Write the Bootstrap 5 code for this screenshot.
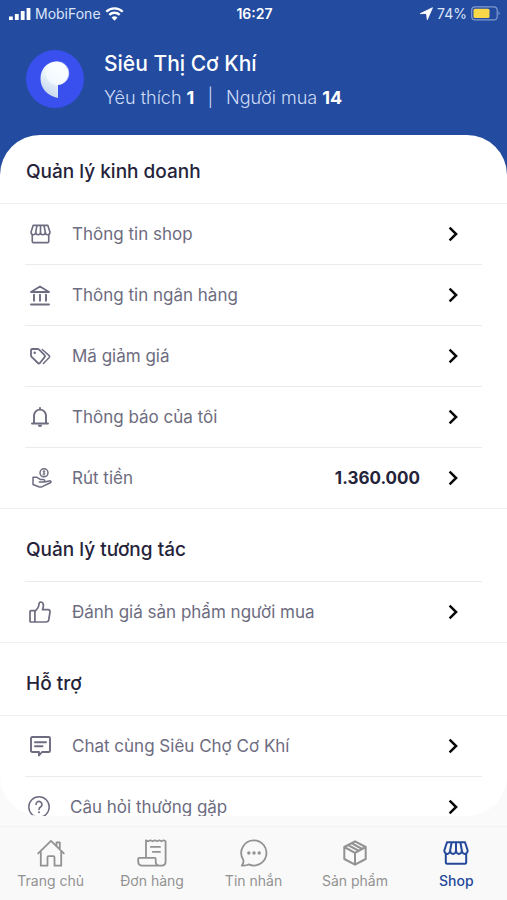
<!DOCTYPE html>
<html lang="vi">
<head>
<meta charset="utf-8">
<meta name="viewport" content="width=device-width, initial-scale=1">
<title>Siêu Thị Cơ Khí</title>
<link href="https://cdn.jsdelivr.net/npm/bootstrap@5.3.0/dist/css/bootstrap.min.css" rel="stylesheet">
<style>
  :root { --brand: #234b9f; --ink: #25233a; --soft: #6d6c80; --rule: #f1f1f1; --page: #fafafa; }
  body { font-family: Inter, "Noto Sans", sans-serif; background: var(--page); color: var(--ink); }
  svg { display: block; flex: none; fill: none; stroke: currentColor; stroke-width: 2; stroke-linecap: round; stroke-linejoin: round; }
  a { color: inherit; text-decoration: none; }
  .brand-bg { background: var(--brand); color: #fff; }
  .status { height: 27px; font-size: 14px; line-height: 20px; padding: 0 7px 0 9px; }
  .status .side { flex: 1 1 0; color: #dbe5fa; }
  .profile { height: 108px; padding: 7px 26px 0; gap: 20px; }
  .shop-name { font-size: 21px; line-height: 28px; font-weight: 500; }
  .stats { font-size: 18px; line-height: 24px; font-weight: 300; color: #cfdcf8; margin-top: 8px; }
  .stats b { color: #fff; font-weight: 700; }
  .stats .bar { padding: 0 13px; }
  .sheet-wrap { min-height: 0; padding-bottom: 10px; background: linear-gradient(var(--brand) 50%, var(--page) 50%); }
  .sheet { border-radius: 40px; }
  .group-title { font-size: 19px; line-height: 24px; font-weight: 500; padding: 29px 26px 19px; margin: 0; }
  .group-title.first { padding-top: 25px; }
  .full-rule { border-bottom: 1px solid var(--rule); }
  .inset-rule { border-bottom: 1px solid #ebebec; margin: 0 25px; }
  .entry { height: 60px; padding: 0 49px 0 26px; font-size: 17px; line-height: 28px; color: var(--soft); }
  .entry .glyph { width: 28px; margin-right: 18px; display: flex; justify-content: center; }
  .entry .glyph.hand { padding-left: 4px; }
  .entry .glyph.help { width: 26px; }
  .amount { color: var(--ink); font-weight: 700; margin-right: 28px; }
  .chev { color: #0a0a0a; }
  .tabs { height: 74px; border-top: 1px solid #f2f2f2; background: #f9f9f9; color: #929292; font-size: 14px; line-height: 20px; padding-top: 12px; }
  .tabs a { flex: 1 1 0; gap: 4px; }
  .tabs .pic { height: 28px; }
  .tabs .active { color: #24499a; font-weight: 500; }
</style>
<script src="https://cdn.jsdelivr.net/npm/bootstrap@5.3.0/dist/js/bootstrap.bundle.min.js"></script>
</head>
<body>
<svg width="0" height="0" class="position-absolute" aria-hidden="true">
  <symbol id="store" viewBox="0 0 26 24"><path d="M4 1.3H22L24.7 9.5a2.92 3.4 0 0 1-5.85 0a2.92 3.4 0 0 1-5.85 0a2.92 3.4 0 0 1-5.85 0a2.92 3.4 0 0 1-5.85 0ZM8.6 1.5 7.15 9.5M13 1.5v8M17.4 1.5l1.45 8M2.8 12.5v8.7q0 1.5 1.5 1.5H21.7q1.5 0 1.5-1.5v-8.7"/></symbol>
  <symbol id="chevron" viewBox="0 0 10 16"><path d="m1.6 1.7 6.5 6.3-6.5 6.3" stroke-width="2.5" stroke-linecap="butt" stroke-linejoin="miter"/></symbol>
</svg>

<div class="d-flex flex-column vh-100 overflow-hidden">
  <header class="brand-bg">
    <div class="status d-flex align-items-center">
      <div class="side d-flex align-items-center gap-1">
        <svg width="22" height="14" viewBox="0 0 22 14" aria-hidden="true"><path d="M0 9.5h3.8V13H0zM5.900 7h3.800v6H5.900zM11.800 4h3.800v9h-3.800zM17.600 1h3.800v12H17.600z" fill="#fff" stroke="none"/></svg>
        <span>MobiFone</span>
        <svg width="19" height="14" viewBox="0 0 19 14" aria-label="Wi-Fi"><path d="M1.300 4.700a11.700 11.700 0 0 1 16.400 0M4.300 7.900a7.400 7.400 0 0 1 10.400 0" stroke="#fff" stroke-width="2.300" stroke-linecap="butt"/><path d="M9.500 13.700 6.500 10.600a4.300 4.300 0 0 1 6 0z" fill="#fff" stroke="none"/></svg>
      </div>
      <div class="fw-semibold">16:27</div>
      <div class="side d-flex align-items-center justify-content-end">
        <svg class="me-1" width="13" height="13" viewBox="0 0 13 13" aria-hidden="true"><path d="M.5 6.500 12.500.7 7.300 12.700 6.500 6.800z" fill="#fff" stroke="#fff" stroke-width=".8"/></svg>
        <span>74%</span>
        <svg class="ms-1" width="29" height="15" viewBox="0 0 29 15" aria-hidden="true"><rect x=".7" y=".9" width="25.500" height="13" rx="3.500" stroke="#7f9ad0" stroke-width="1.200"/><rect x="2.500" y="2.700" width="16" height="9.400" rx="1.500" fill="#fad749" stroke="none"/><path d="M27.500 5v4.500q2.300-2.200 0-4.500" fill="#7f9ad0" stroke="none"/></svg>
      </div>
    </div>
    <div class="profile d-flex align-items-start">
      <svg class="mt-3" width="58" height="58" viewBox="0 0 58 58" role="img" aria-label="Logo">
        <defs><linearGradient id="leaf" x1=".3" y1="1" x2=".7" y2=".2"><stop offset="0" stop-color="#c3d2ea"/><stop offset=".6" stop-color="#e9f3fb"/><stop offset="1" stop-color="#fff"/></linearGradient></defs>
        <circle cx="29" cy="29" r="29" fill="#3950ee" stroke="none"/>
        <path d="M32 48C22 46 14.500 39 14.500 28.500C14.500 18.500 21.500 11.500 31 11.500A11.800 11.800 0 0 1 32 35Z" fill="url(#leaf)" stroke="none"/>
        <circle cx="31.500" cy="23.200" r="11.700" fill="#f8fcff" fill-opacity=".7" stroke="none"/>
      </svg>
      <div class="pt-3">
        <h1 class="shop-name m-0">Siêu Thị Cơ Khí</h1>
        <div class="stats d-flex"><span>Yêu thích <b>1</b></span><span class="bar">|</span><span>Người mua <b>14</b></span></div>
      </div>
    </div>
  </header>

  <main class="sheet-wrap flex-grow-1">
    <div class="sheet bg-white h-100 overflow-hidden">
      <section>
        <h2 class="group-title first full-rule">Quản lý kinh doanh</h2>
        <a href="#" class="entry d-flex align-items-center"><span class="glyph"><svg width="21" height="20"><use href="#store"/></svg></span><span class="flex-grow-1">Thông tin shop</span><svg class="chev" width="10" height="16"><use href="#chevron"/></svg></a>
        <div class="inset-rule"></div>
        <a href="#" class="entry d-flex align-items-center"><span class="glyph"><svg width="20" height="21" viewBox="0 0 20 21"><path d="M1 7 10 1.500 19 7ZM4 9.800v6M10 9.800v6M16 9.800v6M1 19.500h18" stroke-width="1.900"/></svg></span><span class="flex-grow-1">Thông tin ngân hàng</span><svg class="chev" width="10" height="16"><use href="#chevron"/></svg></a>
        <div class="inset-rule"></div>
        <a href="#" class="entry d-flex align-items-center"><span class="glyph"><svg width="21" height="17" viewBox="0 0 21 17"><path d="M2.200 1h5.500q.6 0 1.100.4l5.800 5.700q1 1 0 2L9.900 15q-1 1-2 0L1.400 8.700Q1 8.200 1 7.600V2.200Q1 1 2.200 1Z" stroke-width="1.800"/><path d="m12.300 1.500 6.900 6.100q.8.9 0 1.800l-5.800 6" stroke-width="1.500"/><circle cx="4.700" cy="4.700" r="1.200" fill="currentColor" stroke="none"/></svg></span><span class="flex-grow-1">Mã giảm giá</span><svg class="chev" width="10" height="16"><use href="#chevron"/></svg></a>
        <div class="inset-rule"></div>
        <a href="#" class="entry d-flex align-items-center"><span class="glyph"><svg width="18" height="20" viewBox="0 0 18 20"><path d="M1 16.500h16M3 16.200V8.600a6 6 0 0 1 12 0v7.600M9 2.300V1" stroke-width="1.900"/><path d="M6.800 17.800h4.400a2.200 2.200 0 0 1-4.400 0" fill="currentColor" stroke="none"/></svg></span><span class="flex-grow-1">Thông báo của tôi</span><svg class="chev" width="10" height="16"><use href="#chevron"/></svg></a>
        <div class="inset-rule"></div>
        <a href="#" class="entry d-flex align-items-center"><span class="glyph hand"><svg width="20" height="20" viewBox="0 0 20 20"><g stroke-width="1.500"><circle cx="12" cy="4.800" r="4"/><path d="M12.900 3.300q-1.800-.6-1.800.5c0 1 1.800.8 1.800 1.900q0 1.100-1.900.5M12 2.400v4.800" stroke-width="1"/><path d="M1 9.200v7.300l5.800 2.300q1.800.6 3.500-.2l8-3.800q1-.6.6-1.400-.5-.7-1.500-.5l-4.900 1.200M1 9.200h3.600l3.600 2.200h3.300q1.300.2 1.200 1.400-.1 1.100-1.300 1.200H7.300"/></g></svg></span><span class="flex-grow-1">Rút tiền</span><span class="amount">1.360.000</span><svg class="chev" width="10" height="16"><use href="#chevron"/></svg></a>
        <div class="full-rule"></div>
      </section>
      <section>
        <h2 class="group-title">Quản lý tương tác</h2>
        <div class="inset-rule"></div>
        <a href="#" class="entry d-flex align-items-center"><span class="glyph"><svg width="22" height="22" viewBox="0 0 22 22"><path d="M1 10.600q0-.9.9-.9h4v11.300h-4Q1 21 1 20.100ZM5.900 10.400q4-3.400 4.100-7.300Q10.100 1 11.900 1q2.500.3 2.500 3.600 0 1.800-.9 4.100h5.600q2.100.2 1.900 2.300l-1.300 8q-.4 2-2.300 2H5.900" stroke-width="1.700"/></svg></span><span class="flex-grow-1">Đánh giá sản phẩm người mua</span><svg class="chev" width="10" height="16"><use href="#chevron"/></svg></a>
        <div class="full-rule"></div>
      </section>
      <section>
        <h2 class="group-title full-rule">Hỗ trợ</h2>
        <a href="#" class="entry d-flex align-items-center"><span class="glyph"><svg width="21" height="21" viewBox="0 0 21 21"><path d="M2.300 1h16.400Q20 1 20 2.300v12.400q0 1.300-1.300 1.300H12l-3 3.500V16H2.300Q1 16 1 14.700V2.300Q1 1 2.300 1ZM5 6.300h11M5 10.300h7.500" stroke-width="1.900"/></svg></span><span class="flex-grow-1">Chat cùng Siêu Chợ Cơ Khí</span><svg class="chev" width="10" height="16"><use href="#chevron"/></svg></a>
        <div class="inset-rule"></div>
        <a href="#" class="entry d-flex align-items-center"><span class="glyph help"><svg width="22" height="22" viewBox="0 0 22 22"><circle cx="11" cy="11" r="10.200" stroke-width="1.500"/><path d="M8 8.500a3 3 0 1 1 4.800 2.300Q11 11.900 11 13.400" stroke-width="1.600"/><circle cx="11" cy="16.200" r="1" fill="currentColor" stroke="none"/></svg></span><span class="flex-grow-1">Câu hỏi thường gặp</span><svg class="chev" width="10" height="16"><use href="#chevron"/></svg></a>
      </section>
    </div>
  </main>

  <nav class="tabs d-flex flex-shrink-0">
    <a href="#" class="d-flex flex-column align-items-center"><span class="pic d-flex align-items-center"><svg width="28" height="28" viewBox="0 0 28 28"><path d="M1.200 14.300 14 1.800l12.800 12.500M3.800 12.500v14.200h6.700v-8.400q0-1.200 1.200-1.200h4.600q1.200 0 1.200 1.200v8.400h6.700V12.500M19.500 6.500V3.300h3.300v6.500" stroke-width="1.800"/></svg></span>Trang chủ</a>
    <a href="#" class="d-flex flex-column align-items-center"><span class="pic d-flex align-items-center"><svg width="30" height="28" viewBox="0 0 30 28"><path d="M9 18.500V1.300l2.200 1 2.200-1 2.200 1 2.200-1 2.200 1 2.200-1 2.200 1 2.200-1 2 1V22.500q0 4.200-4.200 4.200H5.500q-4.300 0-4.300-4.500v-2.400q0-1 1-1h15.500q1 0 1 1.200v2.200q0 4.500 4 4.500M13.800 7.900h9.200M15.800 12.900h7.200" stroke-width="1.800"/></svg></span>Đơn hàng</a>
    <a href="#" class="d-flex flex-column align-items-center"><span class="pic d-flex align-items-center"><svg width="28" height="28" viewBox="0 0 28 28"><path d="M14 1.300a12.600 12.600 0 1 1-5.300 24.100Q7 26.900 1.800 26.600q2.300-2.800 1.400-6A12.600 12.600 0 0 1 14 1.300Z" stroke-width="1.800"/><g fill="currentColor" stroke="none"><circle cx="8.800" cy="14" r="1.700"/><circle cx="14" cy="14" r="1.700"/><circle cx="19.200" cy="14" r="1.700"/></g></svg></span>Tin nhắn</a>
    <a href="#" class="d-flex flex-column align-items-center"><span class="pic d-flex align-items-center"><svg width="24" height="26" viewBox="0 0 24 26"><path d="M12 1.300 22.700 7v12L12 24.700 1.300 19V7ZM1.300 7 12 12.800 22.700 7M12 12.800v11.900M5 5l10.800 5.800M8.500 3.200 19.200 9" stroke-width="2"/></svg></span>Sản phẩm</a>
    <a href="#" class="active d-flex flex-column align-items-center" aria-current="page"><span class="pic d-flex align-items-center"><svg width="26" height="24"><use href="#store"/></svg></span>Shop</a>
  </nav>
</div>
</body>
</html>
